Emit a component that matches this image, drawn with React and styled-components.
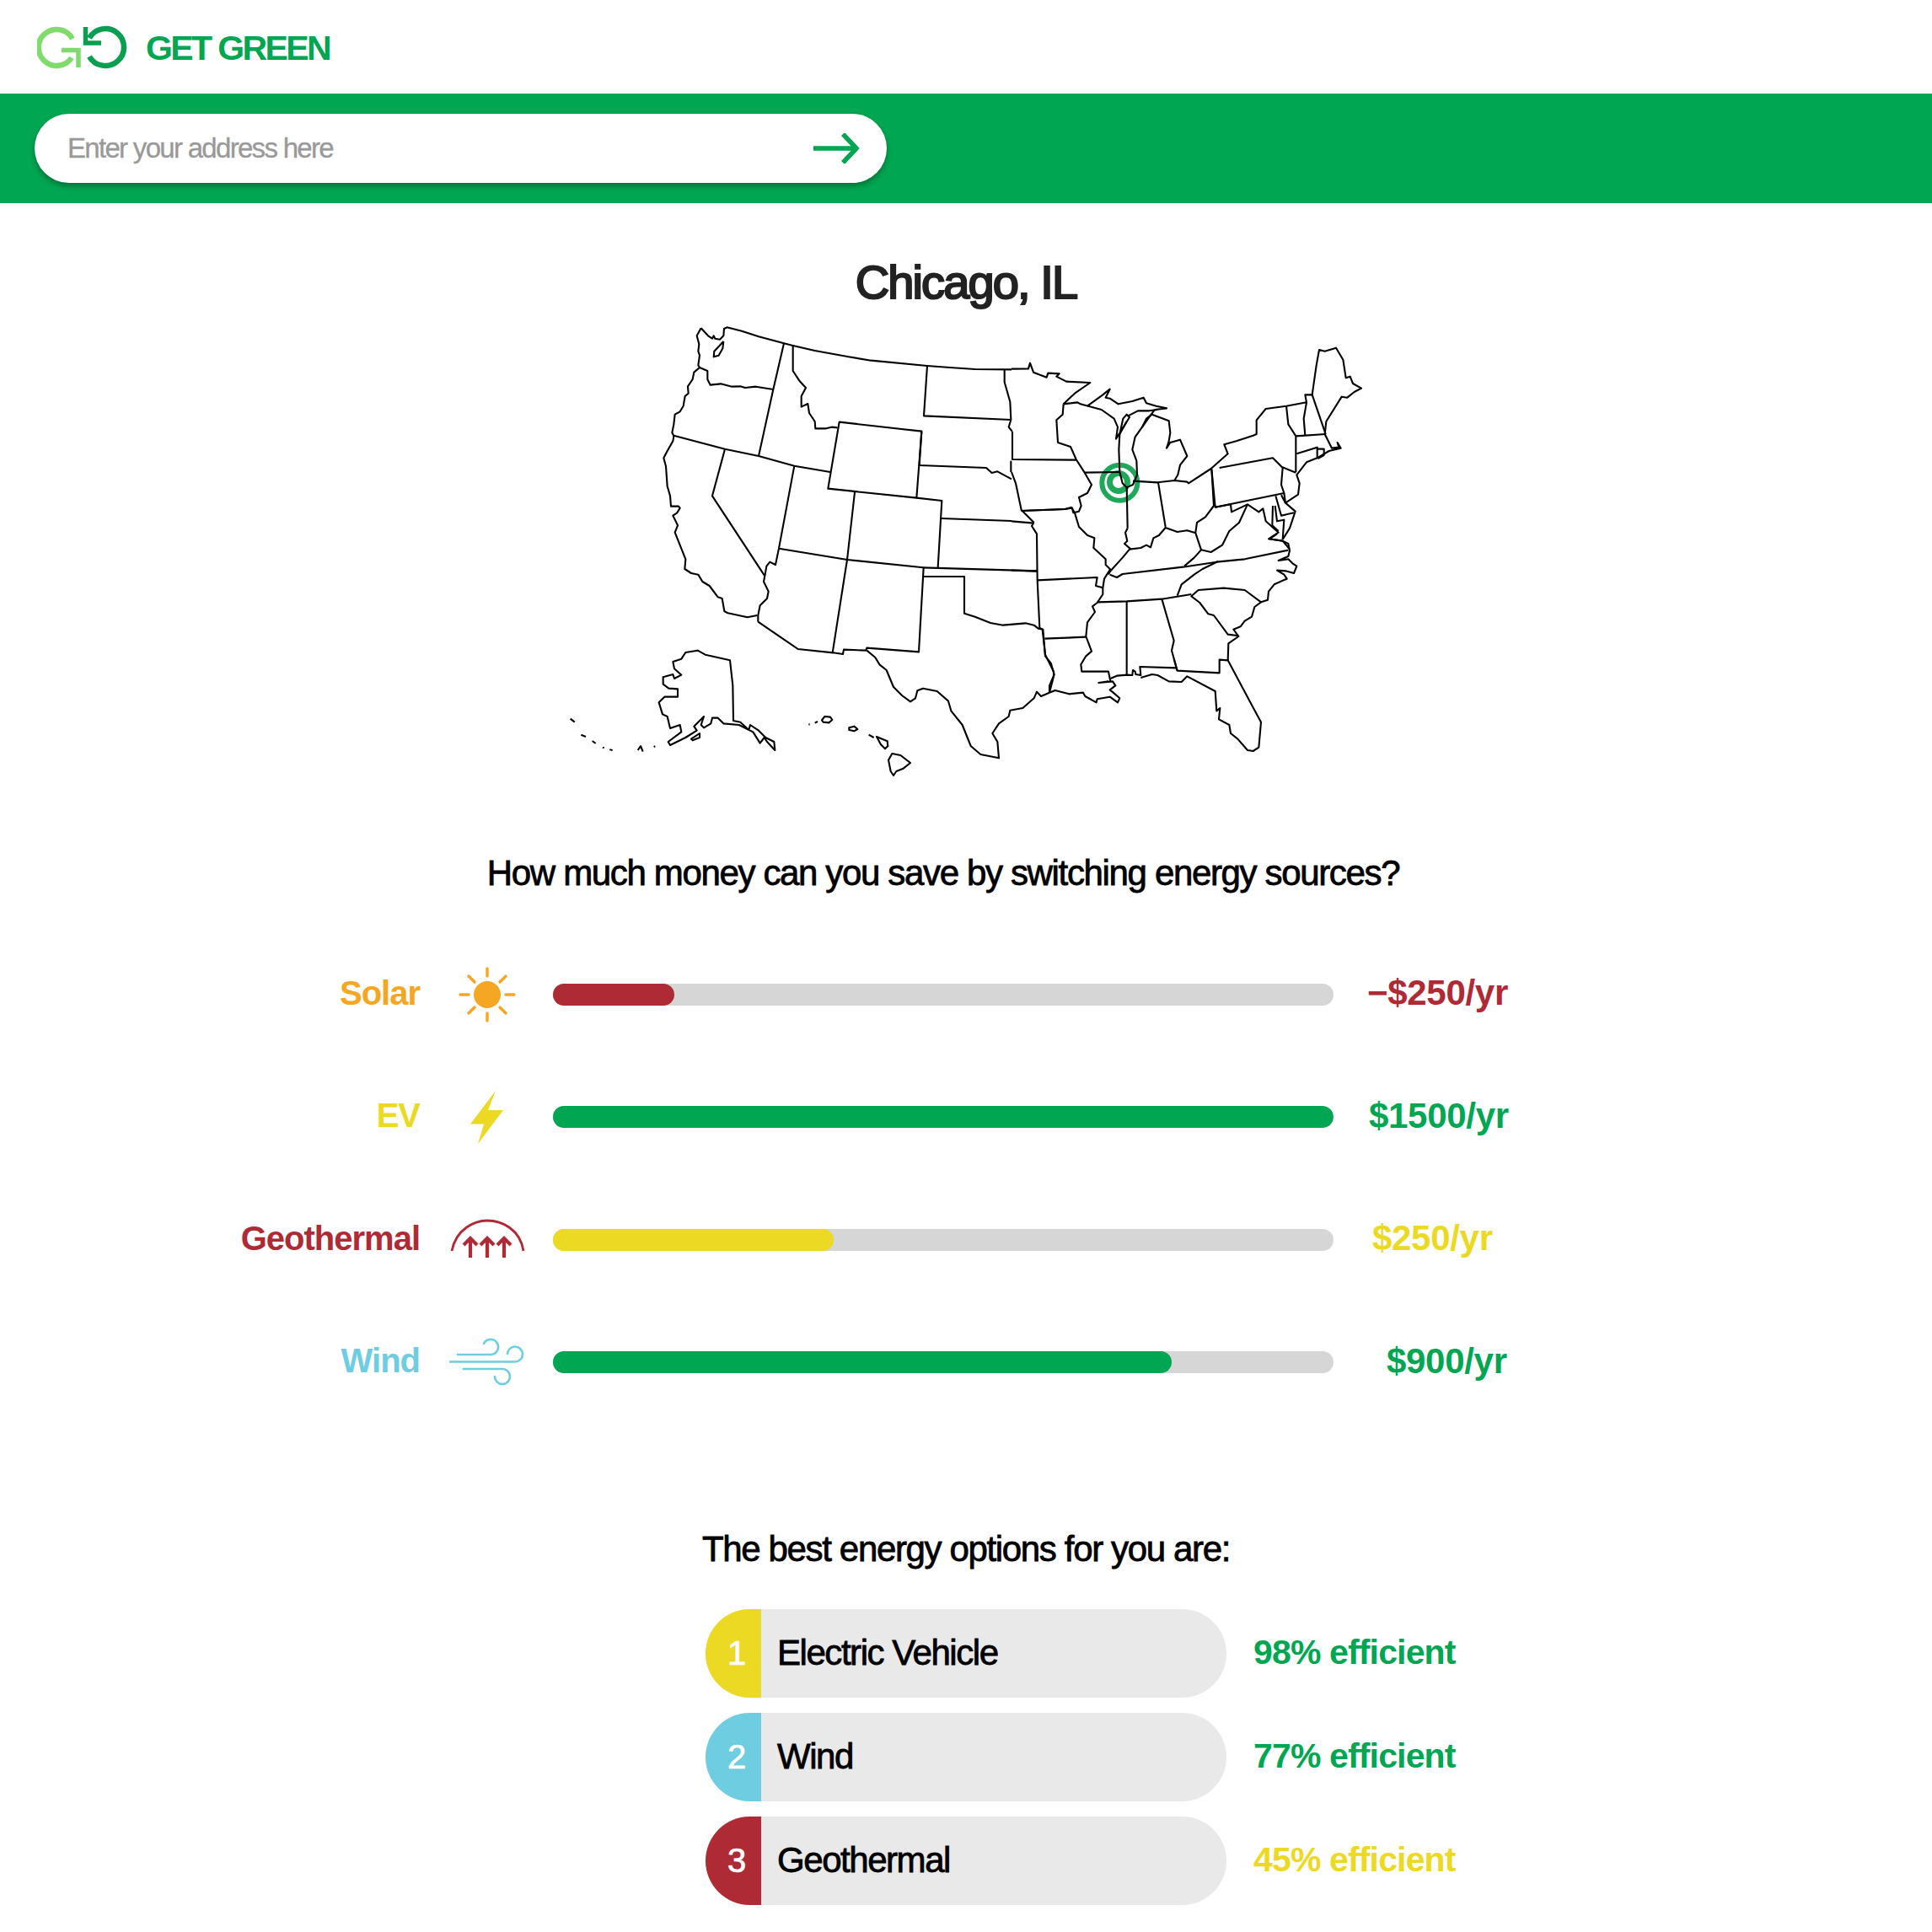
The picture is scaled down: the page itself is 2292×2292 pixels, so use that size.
import React from "react";
import styled, { createGlobalStyle } from "styled-components";

const GREEN = "#00a651";
const RED = "#ae2a35";
const YELLOW = "#ebd924";
const ORANGE = "#f5a623";
const BLUE = "#6ecde0";

const GlobalStyle = createGlobalStyle`
  html, body {
    margin: 0;
    padding: 0;
    background: #fff;
    font-family: "Liberation Sans", Arial, sans-serif;
  }
`;

const Header = styled.header`
  display: flex;
  align-items: center;
  height: 111px;
  padding-left: 44px;
`;

const Brand = styled.div`
  margin-left: 21px;
  padding-top: 3px;
  color: ${GREEN};
  font-size: 41px;
  font-weight: 700;
  letter-spacing: -2.6px;
`;

const SearchBand = styled.div`
  height: 130px;
  padding: 24px 41px;
  box-sizing: border-box;
  background: ${GREEN};
`;

const SearchBox = styled.div`
  display: flex;
  align-items: center;
  width: 1011px;
  height: 82px;
  padding: 0 32px 0 39px;
  box-sizing: border-box;
  border-radius: 41px;
  background: #fff;
  box-shadow: 0 4px 6px rgba(0, 0, 0, 0.3);
`;

const SearchInput = styled.input`
  flex: 1;
  border: 0;
  outline: 0;
  padding: 0;
  background: none;
  font-family: inherit;
  font-size: 33px;
  letter-spacing: -1.7px;
  -webkit-text-stroke: 0.3px #999;
  &::placeholder {
    color: #999;
    opacity: 1;
  }
`;

const Main = styled.main`
  display: flex;
  flex-direction: column;
`;

const City = styled.h1`
  margin: 70px 0 26px;
  color: #222;
  font-size: 56px;
  font-weight: 400;
  line-height: 48px;
  letter-spacing: -1.9px;
  text-align: center;
  -webkit-text-stroke: 2.2px #222;
`;

const MapFrame = styled.svg`
  display: block;
  width: 1020px;
  height: 548px;
  margin-left: 640px;
`;

const Question = styled.h2`
  margin: ${(p) => p.$top}px 0 0;
  padding-right: ${(p) => p.$shift}px;
  color: #000;
  font-size: 42px;
  font-weight: 400;
  line-height: 50px;
  letter-spacing: -1.35px;
  text-align: center;
  -webkit-text-stroke: 0.8px #000;
`;

const Savings = styled.section`
  margin-top: 46px;
  padding-left: 280px;
`;

const SavingRow = styled.div`
  display: flex;
  align-items: center;
  height: 145.5px;
`;

const SourceLabel = styled.div`
  width: 218px;
  padding-bottom: 3px;
  color: ${(p) => p.$color};
  font-size: 40px;
  font-weight: 700;
  letter-spacing: -1px;
  text-align: right;
`;

const SourceIcon = styled.svg`
  flex: none;
  width: 90px;
  height: 70px;
  margin: 0 33px 0 35px;
`;

const Track = styled.div`
  flex: none;
  width: 926px;
  height: 26px;
  border-radius: 13px;
  background: #d6d6d6;
  overflow: hidden;
`;

const Fill = styled.div`
  height: 100%;
  border-radius: 0 13px 13px 0;
  background: ${(p) => p.$color};
`;

const Amount = styled.div`
  margin-left: ${(p) => p.$offset}px;
  padding-bottom: 3px;
  color: ${(p) => p.$color};
  font-size: 42px;
  font-weight: 700;
  letter-spacing: -0.3px;
`;

const Options = styled.section`
  display: flex;
  flex-direction: column;
  gap: 18px;
  margin-top: 46px;
  padding-left: 837px;
`;

const OptionRow = styled.div`
  display: flex;
  align-items: center;
  gap: 32px;
`;

const Pill = styled.div`
  display: flex;
  align-items: center;
  width: 618px;
  height: 105px;
  border-radius: 53px;
  background: #e9e9e9;
  overflow: hidden;
`;

const Rank = styled.div`
  display: flex;
  align-items: center;
  justify-content: center;
  align-self: stretch;
  width: 66px;
  padding-left: 8px;
  box-sizing: border-box;
  background: ${(p) => p.$color};
  color: #fff;
  font-size: 40px;
  -webkit-text-stroke: 0.7px #fff;
`;

const OptionName = styled.div`
  margin-left: 19px;
  padding-bottom: 2px;
  color: #000;
  font-size: 42px;
  letter-spacing: -1.45px;
  -webkit-text-stroke: 0.8px #000;
`;

const Efficiency = styled.div`
  padding-bottom: 2px;
  color: ${(p) => p.$color};
  font-size: 41px;
  font-weight: 700;
  letter-spacing: -0.85px;
`;

const Logo = () => (
  <svg width="108" height="52" viewBox="44 30 108 52" fill="none">
    <path d="M86 46A21.500 21.500 0 1 0 85 68.500" stroke="#7edb6c" strokeWidth="6.500" />
    <path d="M73 59.500H93V80" stroke="#7edb6c" strokeWidth="5.500" />
    <path d="M106 45A22 22 0 1 1 106 67" stroke="#0a9e50" strokeWidth="6.500" />
    <path d="M101.500 32V51H120" stroke="#0a9e50" strokeWidth="5.500" />
  </svg>
);

const Arrow = () => (
  <svg width="56" height="36" viewBox="0 0 56 36" fill="none" stroke={GREEN} strokeWidth="5.500">
    <path d="M1 18H52M36 1L52 18L36 35" />
  </svg>
);

const SunIcon = () => (
  <SourceIcon viewBox="0 0 90 70" fill="none">
    <circle cx="45" cy="35" r="16" fill={ORANGE} />
    <g stroke={ORANGE} strokeWidth="3.400" strokeLinecap="round">
      <path d="M45 4V13M45 57V66M13 35H23M67 35H77M23 13L30 20M67 13L60 20M23 57L30 50M67 57L60 50" />
    </g>
  </SourceIcon>
);

const BoltIcon = () => (
  <SourceIcon viewBox="0 0 90 70">
    <path d="M55 4L25 43.500H41L34 67L64 27H46Z" fill={YELLOW} />
  </SourceIcon>
);

const HeatIcon = () => (
  <SourceIcon viewBox="0 0 90 70" fill="none" stroke={RED}>
    <path d="M3 48C8 22 30 12 45 12C62 12 84 22 88 48" strokeWidth="2.800" />
    <path d="M25 56V33M17 41L25 33L33 41M45 56V33M37 41L45 33L53 41M65 56V33M57 41L65 33L73 41" strokeWidth="4.200" />
  </SourceIcon>
);

const WindIcon = () => (
  <SourceIcon viewBox="0 0 90 70" fill="none" stroke={BLUE} strokeWidth="2.600" strokeLinecap="round">
    <path d="M10 26H50A9 9 0 1 0 41 13" />
    <path d="M1 34.500H78A9 9 0 1 0 69 25" />
    <path d="M17 43H63A9 9 0 1 1 54 52" />
  </SourceIcon>
);

// map lines traced at 3x, one list per part of the map, origin given by the group
const NORTHWEST = [
  "M155 28L180 55L195 65L200 55L205 65L222 68L235 55L237 30L247 25L300 38L360 58L450 82L482 90L560 108L680 130L760 143L960 162L1040 168L1130 174L1260 175",
  "M155 28L140 55L148 85L145 110L150 125L145 160L150 168L130 185L125 210L108 235L110 260L98 270L92 305L80 325L62 335L58 370L52 400L58 412L55 430L35 465L22 490L30 520L35 590L45 625L48 662L75 662L80 668L70 685L55 695L72 730L62 755L100 850L97 885L120 900L145 905L160 930L185 945L215 985L230 990L238 1035L250 1042L320 1057L355 1050",
  "M235 75L202 110L200 130L218 125L232 100L235 75",
  "M150 168L178 180L178 210L188 230L225 226L265 236L295 235L312 240L350 236L412 246",
  "M450 82L412 246L360 483",
  "M58 410L240 458L360 483L487 518L615 540",
  "M240 458L195 625L382 910",
  "M487 518L432 812L420 870L400 860L388 875L382 910L378 930L395 965L390 990L365 1015L358 1050L358 1073",
  "M482 90L482 180L505 215L528 240L512 270L512 308L535 297L540 330L560 360L562 385L600 385L620 380L640 382",
  "M647 362L940 395L922 632L607 599Z",
  "M960 162L948 340L1258 354",
  "M940 395L932 516L1170 525L1190 543L1210 538L1260 565",
  "M922 632L1012 642L998 880",
  "M702 612L675 852",
  "M432 812L675 852L945 880",
  "M1010 705L1260 714",
  "M1235 175L1235 220L1255 290L1258 354L1250 380L1262 395",
  "M1258 500L1258 540",
];

const SOUTHWEST = [
  "M358 293L500 390L625 403L660 408L663 392L742 395L745 386L930 400L947 100",
  "M675 72L623 403",
  "M945 100L1352 112",
  "M947 132L1092 132L1092 263L1130 275L1185 297L1230 305L1310 298L1340 305L1355 317L1372 320L1380 415L1400 440L1412 480L1395 545",
  "M745 395L775 420L790 445L815 465L840 525L870 555L900 577L918 565L925 538L945 530L995 540L1035 575L1045 610L1085 660L1115 735L1150 765L1215 778L1210 720L1192 690L1215 655L1250 630L1255 608L1300 600L1340 565L1350 542L1365 558L1395 545",
];

const GREAT_LAKES = [
  "M0 113L60 112L66 92L78 125L125 143L130 128L170 130L160 140L195 158L280 162L225 200L185 238",
  "M185 238L235 232L245 238L320 258L365 290L378 320L372 362L420 285L410 275L397 290L385 345",
  "M270 245L325 205L350 185L335 215L350 218L380 238L430 228L470 215L480 235L515 245L552 253L510 258L490 285L465 320L440 355L430 400L445 440L447 490L432 525L410 535L395 520L385 480L382 400L385 345L410 300",
  "M465 320L480 290L500 275L560 298L565 340L560 370L552 395L565 375L600 365L625 423L600 455L592 490L580 510",
  "M415 280L450 262L490 262L520 258",
  "M185 238L182 275L160 295L165 375L210 390L230 435L260 482L285 525L270 555L240 570L248 600L240 620L220 625L215 605",
  "M3 335L3 435L230 437",
  "M260 482L385 480",
  "M0 480L15 520L35 615L80 660",
  "M35 618L190 612L215 605",
  "M432 512L520 517L580 510L625 515L630 520L710 468L770 415L757 382L800 370L860 350L872 345L872 295L905 255L978 245L1050 232L1045 205L1070 205L1085 100L1095 45L1115 50L1155 38L1180 80L1190 145L1205 140L1215 165L1245 182L1220 195L1195 215L1175 212L1120 300L1115 345L1140 395L1165 392L1160 375L1172 395L1130 405L1088 430L1050 445L1015 490L1025 520L1020 560L975 590L1010 620L990 680L965 720",
  "M978 245L985 310L1012 352L1012 480",
  "M1050 232L1040 290L1045 350",
  "M1070 205L1118 345",
  "M1012 352L1118 345",
  "M1015 415L1088 392L1088 430",
  "M1088 398L1112 398L1112 420L1090 432",
  "M740 465L930 430L962 462L1012 482",
  "M712 470L725 605L970 555L960 525L965 465",
  "M970 555L975 590",
  "M725 605L780 595L783 622L840 595L880 622L895 610L905 655L950 695L915 718L965 725L990 755",
  "M940 565L960 635L1005 625",
  "M960 562L975 590",
  "M930 600L928 670L950 690",
  "M938 600L945 655L970 650L965 720",
  "M840 595L810 660L775 690L750 740L710 765L675 757",
  "M712 470L720 600L690 640L660 660L655 695",
  "M410 535L413 680",
  "M522 517L548 675",
];

const SOUTHEAST = [
  "M35 18L190 12L215 8L225 25L240 75L270 105L295 115L292 150L335 190L335 210L353 228L345 245",
  "M0 55L78 62L72 72L90 100L92 265L100 435",
  "M0 230L90 233",
  "M92 265L305 255L300 285L325 292L330 260L350 228",
  "M325 292L325 315L305 345L288 358L297 378L270 415L265 465L285 518L265 535L247 565L250 590L345 590L352 625",
  "M118 473L265 467",
  "M100 435L110 440L120 530L150 590L150 605L135 640L135 665",
  "M135 665L155 657L205 670L255 665L262 678L302 700L305 688L350 680L378 700L385 685L362 665L350 655L370 640L360 625L310 630L345 625",
  "M352 615L375 605L412 602L430 603L432 585L440 590L442 600L460 603L457 573L585 577",
  "M460 612L500 600L520 603L560 625L605 627L625 607L725 660L730 730L742 720L738 760L775 780L780 810L805 830L840 870L860 873L880 860L888 770L850 700L770 550L740 548L740 595L590 587L578 545",
  "M770 550L772 490L808 465L790 440L815 430L830 410L855 395L865 360L888 343L912 335L915 305L935 280L980 260L970 245L945 230L975 232L1005 240L1015 215L1000 205L985 190L950 195L985 180L990 160L985 135L965 125L918 118L945 100",
  "M888 343L830 300L755 293L665 300L640 322L670 345L700 385L720 390L770 458L808 463",
  "M305 343L410 340L535 332L640 315",
  "M590 320L605 280L650 245L680 225L735 198",
  "M350 245L375 255L395 243L610 218L730 200L830 190L985 158",
  "M410 340L410 602",
  "M535 332L578 480L570 515L590 587",
  "M345 240L395 185L420 155L460 150L480 140L495 148L505 115L525 105L548 78L590 93L625 88L655 97L675 157L650 185L615 215",
  "M413 80L405 95L412 125L402 135L425 155",
];

const ALASKA_HAWAII = [
  "M415 75L445 65L460 42L503 35L530 50L618 70L628 160L630 285L655 290L685 318L690 300L720 320L745 345L775 360L778 390L750 360L740 345L725 365L700 325L650 300L595 295L575 275L555 275L550 295L525 310L515 300L525 270L490 305L500 320L460 345L405 372L398 360L445 325L440 300L405 312L395 270L378 262L365 220L385 200L432 200L432 172L400 170L380 155L380 130L415 120L420 135L445 122L420 100Z",
  "M480 350L510 330L510 345L485 355Z",
  "M50 278L65 290M88 335L105 342M128 357L140 366M165 380L170 382M190 388L200 390",
  "M290 390L300 375L308 395M347 378L352 376",
  "M945 283L955 270L975 272L982 282L970 292L950 290Z",
  "M920 293L930 288M898 298L902 298",
  "M1042 310L1060 305L1072 315L1060 322L1042 318Z",
  "M1112 335L1130 345",
  "M1140 342L1178 358L1180 375L1170 385L1155 370Z",
  "M1195 402L1225 408L1260 435L1235 455L1210 465L1200 480L1190 465L1182 425Z",
];

const MAP_PARTS = [
  { x: 780, y: 380, lines: NORTHWEST },
  { x: 780, y: 640, lines: SOUTHWEST },
  { x: 1200, y: 400, lines: GREAT_LAKES },
  { x: 1200, y: 600, lines: SOUTHEAST },
  { x: 660, y: 760, lines: ALASKA_HAWAII },
];

const Line = styled.path`
  vector-effect: non-scaling-stroke;
  fill: none;
  stroke: #000;
  stroke-width: 2.1px;
  stroke-linejoin: round;
`;

const Ring = styled.circle`
  fill: none;
  stroke: #1fa75a;
  stroke-width: ${(p) => p.$weight}px;
`;

const UsMap = () => (
  <MapFrame viewBox="640 385 1020 548">
    <Ring cx="1328.300" cy="572.700" r="21" $weight="6" />
    <Ring cx="1327" cy="572" r="10.500" $weight="7" />
    {MAP_PARTS.map(({ x, y, lines }) => (
      <g key={`${x}-${y}`} transform={`translate(${x} ${y}) scale(0.33333)`}>
        {lines.map((d) => (
          <Line key={d} d={d} />
        ))}
      </g>
    ))}
  </MapFrame>
);

const SAVINGS = [
  { name: "Solar", color: ORANGE, Icon: SunIcon, fill: RED, pct: 15.5, amount: "−$250/yr", amountColor: RED, offset: 40 },
  { name: "EV", color: YELLOW, Icon: BoltIcon, fill: GREEN, pct: 100, amount: "$1500/yr", amountColor: GREEN, offset: 42 },
  { name: "Geothermal", color: RED, Icon: HeatIcon, fill: YELLOW, pct: 36, amount: "$250/yr", amountColor: YELLOW, offset: 46 },
  { name: "Wind", color: BLUE, Icon: WindIcon, fill: GREEN, pct: 79.3, amount: "$900/yr", amountColor: GREEN, offset: 63 },
];

const BEST = [
  { rank: 1, color: YELLOW, name: "Electric Vehicle", score: "98% efficient", scoreColor: GREEN },
  { rank: 2, color: BLUE, name: "Wind", score: "77% efficient", scoreColor: GREEN },
  { rank: 3, color: RED, name: "Geothermal", score: "45% efficient", scoreColor: YELLOW },
];

export default function App() {
  return (
    <>
      <GlobalStyle />
      <Header>
        <Logo />
        <Brand>GET GREEN</Brand>
      </Header>
      <SearchBand>
        <SearchBox>
          <SearchInput placeholder="Enter your address here" />
          <Arrow />
        </SearchBox>
      </SearchBand>
      <Main>
        <City>Chicago, IL</City>
        <UsMap />
        <Question $top={78} $shift={54}>How much money can you save by switching energy sources?</Question>
        <Savings>
          {SAVINGS.map(({ name, color, Icon, fill, pct, amount, amountColor, offset }) => (
            <SavingRow key={name}>
              <SourceLabel $color={color}>{name}</SourceLabel>
              <Icon />
              <Track>
                <Fill $color={fill} style={{ width: `${pct}%` }} />
              </Track>
              <Amount $color={amountColor} $offset={offset}>{amount}</Amount>
            </SavingRow>
          ))}
        </Savings>
        <Question $top={124} $shift={0}>The best energy options for you are:</Question>
        <Options>
          {BEST.map(({ rank, color, name, score, scoreColor }) => (
            <OptionRow key={rank}>
              <Pill>
                <Rank $color={color}>{rank}</Rank>
                <OptionName>{name}</OptionName>
              </Pill>
              <Efficiency $color={scoreColor}>{score}</Efficiency>
            </OptionRow>
          ))}
        </Options>
      </Main>
    </>
  );
}
